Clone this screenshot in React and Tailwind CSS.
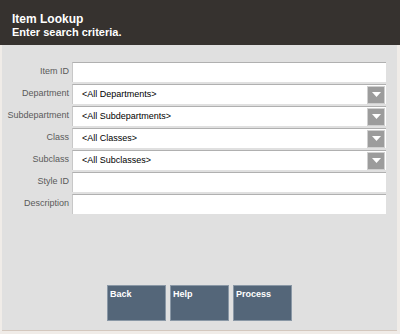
import React from 'react'

const fields = [
    { label: 'Item ID' },
    { label: 'Department', value: '<All Departments>', select: true },
    { label: 'Subdepartment', value: '<All Subdepartments>', select: true },
    { label: 'Class', value: '<All Classes>', select: true },
    { label: 'Subclass', value: '<All Subclasses>', select: true },
    { label: 'Style ID' },
    { label: 'Description' },
];

const Arrow = () => (
    <div className="w-[18px] h-[18px] bg-[#9c9c9c] border border-[#d0d0d0] flex items-center justify-center mr-[1px]">
        <svg width="9" height="6" viewBox="0 0 9 6">
            <path d="M0 0 H9 L4.5 5 Z" fill="#ffffff" />
        </svg>
    </div>
);

const App = () => {
    return (
        <div className="w-[400px] h-[334px] bg-[#f0ece8] flex flex-col font-['Liberation_Sans',Arial,sans-serif]">
            <div className="h-[45px] bg-[#36322f] text-white font-bold pl-[12px] pt-[13px] leading-[12px]">
                <div className="text-[12px]">Item Lookup</div>
                <div className="text-[11px] mt-[1px]">Enter search criteria.</div>
            </div>

            <div className="flex-1 ml-[2px] mr-[3px] mb-[3px] bg-[#e0e0e0] border-b border-[#d4c8be] flex flex-col">
                <div className="flex flex-col gap-[2px] pt-[17px] pr-[11px]">
                    {fields.map((f) => (
                        <div key={f.label} className="flex items-center h-[20px]">
                            <div className="w-[70px] text-right text-[9px] text-[#5a5a5a] pr-[3px]">{f.label}</div>
                            <div className="flex-1 h-[20px] bg-white border-t border-[#b0b0b0] border-l border-l-[#c8c8c8] flex items-center">
                                <div className="flex-1 pl-[9px] text-[9px] text-black">{f.value}</div>
                                {f.select && <Arrow />}
                            </div>
                        </div>
                    ))}
                </div>

                <div className="mt-auto mb-[9px] flex gap-[4px] pl-[105px]">
                    {['Back', 'Help', 'Process'].map((b) => (
                        <div key={b} className="w-[59px] h-[36px] bg-[#546679] border border-[#8a98a6] text-white text-[9px] font-bold px-[2px] pt-[2px]">{b}</div>
                    ))}
                </div>
            </div>
        </div>
    )
}

export default App
